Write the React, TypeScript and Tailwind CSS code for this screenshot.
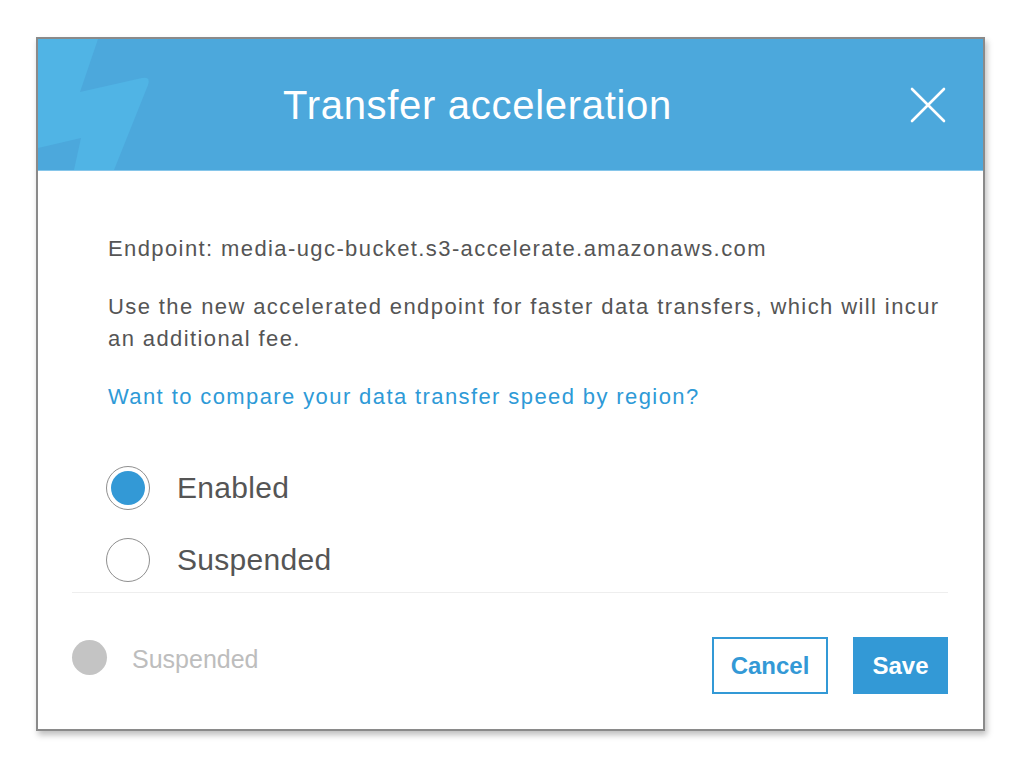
import React, { useState } from 'react';

const font = { fontFamily: '"Liberation Sans", Arial, Helvetica, sans-serif' };

const Bolt: React.FC = () => (
  <svg
    className="absolute left-0 top-0"
    width="160"
    height="131"
    viewBox="0 0 160 131"
    fill="none"
  >
    <path
      d="M0 0 L60 0 L42 53 L104 39 Q113 37 110 46 L76 131 L36 131 L43 99 L0 109 Z"
      fill="#50b4e5"
    />
  </svg>
);

const CloseIcon: React.FC = () => (
  <svg width="36" height="36" viewBox="0 0 36 36" fill="none">
    <path
      d="M2 2 L34 34 M34 2 L2 34"
      stroke="#ffffff"
      strokeWidth="2.6"
      strokeLinecap="round"
    />
  </svg>
);

interface RadioRowProps {
  label: string;
  checked: boolean;
  onSelect: () => void;
}

const RadioRow: React.FC<RadioRowProps> = ({ label, checked, onSelect }) => (
  <button type="button" onClick={onSelect} className="flex items-center gap-[27px] text-left">
    <span className="flex h-[44px] w-[44px] items-center justify-center rounded-full border-[1.5px] border-[#8f8f8f] bg-white">
      {checked && <span className="h-[34px] w-[34px] rounded-full bg-[#3399d6]" />}
    </span>
    <span className="text-[30px] leading-[44px] tracking-[0.3px] text-[#555555]">{label}</span>
  </button>
);

export default function App() {
  const [status, setStatus] = useState<'enabled' | 'suspended'>('enabled');

  return (
    <div className="min-h-[776px] w-full bg-white pl-[36px] pt-[37px]" style={font}>
      <div className="flex h-[694px] w-[949px] flex-col border-2 border-[#8a8a8a] bg-white shadow-[2px_4px_6px_rgba(0,0,0,0.25)]">
        {/* header */}
        <div className="relative flex h-[132px] shrink-0 items-center overflow-hidden border-b border-[#86c6ea] bg-[#4ca8dc]">
          <Bolt />
          <div className="relative flex flex-1 justify-center pl-[7px]">
            <h2 className="text-[40px] tracking-[0.7px] text-white">Transfer acceleration</h2>
          </div>
          <button type="button" className="relative mr-[37px] flex items-center" title="Close">
            <CloseIcon />
          </button>
        </div>

        {/* body */}
        <div className="flex flex-1 flex-col pl-[34px] pr-[35px]">
          <div className="pl-[36px] pt-[62px] text-[22px] leading-[32px] tracking-[1.4px] text-[#555555]">
            <p>Endpoint: media-ugc-bucket.s3-accelerate.amazonaws.com</p>
            <p className="mt-[26px]">
              Use the new accelerated endpoint for faster data transfers, which will incur an additional fee.
            </p>
            <a href="#" className="mt-[26px] block text-[#2e9ad7]">
              Want to compare your data transfer speed by region?
            </a>
          </div>

          <div className="mt-[53px] flex flex-col gap-[28px] pl-[34px]">
            <RadioRow label="Enabled" checked={status === 'enabled'} onSelect={() => setStatus('enabled')} />
            <RadioRow label="Suspended" checked={status === 'suspended'} onSelect={() => setStatus('suspended')} />
          </div>

          <div className="mt-[10px] border-t border-[#eeeeee]" />

          <div className="flex items-start justify-between pt-[44px]">
            <div className="flex items-center gap-[25px]">
              <span className="h-[35px] w-[35px] rounded-full bg-[#c4c4c4]" />
              <span className="mt-[4px] text-[25px] text-[#bdbdbd]">
                {status === 'enabled' ? 'Suspended' : 'Enabled'}
              </span>
            </div>
            <div className="flex gap-[25px]">
              <button
                type="button"
                className="h-[57px] w-[116px] border-2 border-[#3399d6] text-[24px] font-bold text-[#3399d6]"
              >
                Cancel
              </button>
              <button
                type="button"
                className="h-[57px] w-[95px] bg-[#3399d6] text-[24px] font-bold text-white"
              >
                Save
              </button>
            </div>
          </div>
        </div>
      </div>
    </div>
  );
}
